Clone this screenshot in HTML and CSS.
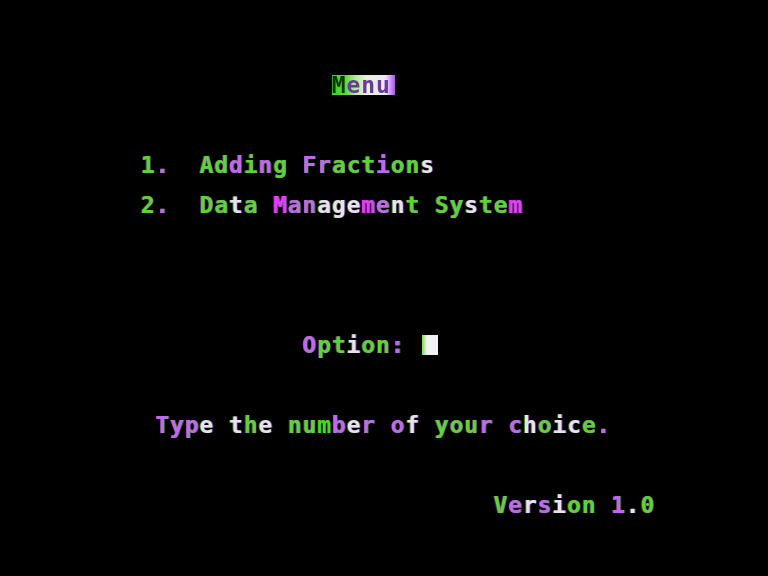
FILE: index.html
```html
<!DOCTYPE html>
<html>
<head>
<meta charset="utf-8">
<link rel="stylesheet" href="styles.css">
</head>
<body>
<div class="screen">
<div class="line row-title">                 <span class="inv"><span class="k">M</span><span class="kp">enu</span></span></div>
<div class="line row-opt1">    <span class="g">1</span><span class="p">.</span>  <span class="g">A</span><span class="g">d</span><span class="p">d</span><span class="g">i</span><span class="p">n</span><span class="g">g</span> <span class="p">F</span><span class="p">r</span><span class="g">a</span><span class="g">c</span><span class="g">t</span><span class="p">i</span><span class="g">o</span><span class="g">n</span><span class="w">s</span></div>
<div class="line row-opt2">    <span class="g">2</span><span class="p">.</span>  <span class="g">D</span><span class="g">a</span><span class="w">t</span><span class="g">a</span> <span class="m">M</span><span class="p">a</span><span class="p">n</span><span class="w">a</span><span class="w">g</span><span class="w">e</span><span class="m">m</span><span class="p">e</span><span class="w">n</span><span class="g">t</span> <span class="g">S</span><span class="g">y</span><span class="w">s</span><span class="g">t</span><span class="g">e</span><span class="m">m</span></div>
<div class="line row-prompt">               <span class="p">O</span><span class="g">p</span><span class="g">t</span><span class="w">i</span><span class="g">o</span><span class="g">n</span><span class="p">:</span> <span class="cursor"></span></div>
<div class="line row-hint">     <span class="p">T</span><span class="p">y</span><span class="p">p</span><span class="w">e</span> <span class="w">t</span><span class="g">h</span><span class="w">e</span> <span class="g">n</span><span class="g">u</span><span class="gg">m</span><span class="p">b</span><span class="w">e</span><span class="p">r</span> <span class="p">o</span><span class="w">f</span> <span class="g">y</span><span class="g">o</span><span class="g">u</span><span class="p">r</span> <span class="p">c</span><span class="w">h</span><span class="g">o</span><span class="w">i</span><span class="w">c</span><span class="g">e</span><span class="p">.</span></div>
<div class="line row-version">                            <span class="g">V</span><span class="p">e</span><span class="w">r</span><span class="p">s</span><span class="w">i</span><span class="g">o</span><span class="g">n</span> <span class="p">1</span><span class="w">.</span><span class="g">0</span></div>
</div>
</body>
</html>
```
FILE: styles.css
```css
html, body {
  margin: 0;
  padding: 0;
  background: #000;
}

body {
  width: 768px;
  height: 576px;
  overflow: hidden;
}

.screen {
  display: grid;
  grid-template-rows: repeat(24, 20px);
  padding: 55px 0 0 82px;
  font-family: "DejaVu Sans Mono", "Liberation Mono", monospace;
  font-weight: bold;
  font-size: 23px;
  letter-spacing: 0.85px;
  line-height: 20px;
  color: #e6e0ee;
  filter: blur(0.5px);
}

.line {
  white-space: pre;
  height: 20px;
}

.row-title { grid-row: 2; }
.row-opt1 { grid-row: 6; }
.row-opt2 { grid-row: 8; }
.row-prompt { grid-row: 15; }
.row-hint { grid-row: 19; }
.row-version { grid-row: 23; }

.g {
  color: #5ad632;
  text-shadow: -1px 0 rgba(190, 80, 250, 0.45), 0.6px 0 rgba(200, 240, 190, 0.5);
}

.gg {
  color: #3fe012;
  text-shadow: -1px 0 rgba(190, 80, 250, 0.3), 0.6px 0 rgba(70, 220, 20, 0.6);
}

.p {
  color: #c266f6;
  text-shadow: 1px 0 rgba(90, 215, 45, 0.4), -0.6px 0 rgba(230, 200, 255, 0.5);
}

.m {
  color: #e040f2;
  text-shadow: 1px 0 rgba(200, 120, 255, 0.5), -0.6px 0 rgba(225, 70, 240, 0.6);
}

.w {
  color: #e8e2f0;
  text-shadow: -1px 0 rgba(90, 215, 45, 0.55), 1px 0 rgba(190, 80, 250, 0.55);
}

.inv {
  display: inline-block;
  height: 20px;
  line-height: 20px;
  padding-right: 4px;
  vertical-align: top;
  background: linear-gradient(90deg, #3ad41c 0%, #58dc34 22%, #b8ec9c 38%, #e6f0de 55%, #ece8f2 85%, #b44cf2 100%);
}

.k {
  color: #12300a;
}

.kp {
  color: #6a3a98;
}

.cursor {
  display: inline-block;
  width: 16px;
  height: 20px;
  margin-left: 2px;
  vertical-align: top;
  background: linear-gradient(90deg, #7ed85a 0%, #eef4ea 30%, #f4f0fa 100%);
}
```
